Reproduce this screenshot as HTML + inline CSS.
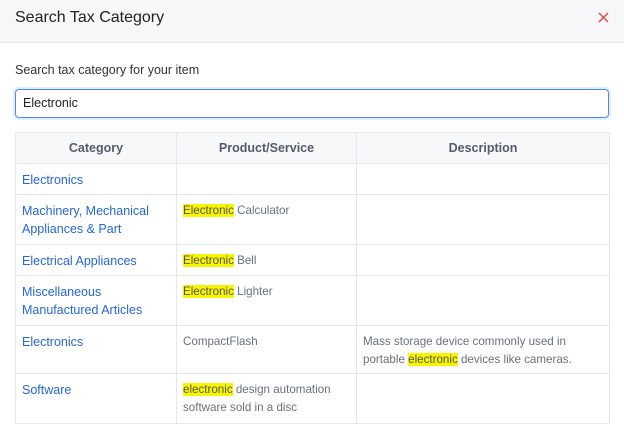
<!DOCTYPE html>
<html><head><style>
*{margin:0;padding:0;box-sizing:border-box}
body{width:624px;height:417px;overflow:hidden;background:#fff;font-family:"Liberation Sans",sans-serif;position:relative}
.hd{height:43px;background:#f7f7f9;border-bottom:1px solid #e7e8ec;position:relative}
.hd h1{position:absolute;left:15px;top:9px;font-size:16px;font-weight:normal;color:#222}
.x{position:absolute;left:598px;top:12px;width:11px;height:11px}
.lbl{position:absolute;left:15px;top:63px;font-size:12.5px;color:#333}
.inp{position:absolute;left:15px;top:89px;width:594px;height:29px;border:1px solid #4a8af4;border-radius:4px;box-shadow:0 0 0 2px #e3ecfd;font-size:12.5px;color:#222;padding:6px 0 0 7px}
table{position:absolute;left:15px;top:132px;width:594px;border-collapse:collapse;table-layout:fixed}
td,th{border:1px solid #e6e7ec;vertical-align:top;padding:7px 6px 0 6px;line-height:18px}
th{height:31px;background:#f7f8fa;font-size:12.5px;color:#555b6e;text-align:center;padding-top:6px}
td{font-size:11.6px;color:#6b7080}
td.c{font-size:12.5px;color:#2567d6}
mark{background:#f7f500;color:#555}
</style></head><body>
<div class="hd"><h1>Search Tax Category</h1>
<svg class="x" viewBox="0 0 11 11"><path d="M1 1L10 10M10 1L1 10" stroke="#e8443a" stroke-width="1.4"/></svg></div>
<div class="lbl">Search tax category for your item</div>
<div class="inp">Electronic</div>
<table>
<colgroup><col style="width:161px"><col style="width:180px"><col style="width:253px"></colgroup>
<tr><th>Category</th><th>Product/Service</th><th>Description</th></tr>
<tr style="height:31px"><td class="c">Electronics</td><td></td><td></td></tr>
<tr style="height:50px"><td class="c">Machinery, Mechanical Appliances &amp; Part</td><td><mark>Electronic</mark> Calculator</td><td></td></tr>
<tr style="height:31px"><td class="c">Electrical Appliances</td><td><mark>Electronic</mark> Bell</td><td></td></tr>
<tr style="height:50px"><td class="c">Miscellaneous Manufactured Articles</td><td><mark>Electronic</mark> Lighter</td><td></td></tr>
<tr style="height:48px"><td class="c">Electronics</td><td>CompactFlash</td><td>Mass storage device commonly used in<br>portable <mark>electronic</mark> devices like cameras.</td></tr>
<tr style="height:50px"><td class="c">Software</td><td><mark>electronic</mark> design automation software sold in a disc</td><td></td></tr>
</table>
</body></html>
